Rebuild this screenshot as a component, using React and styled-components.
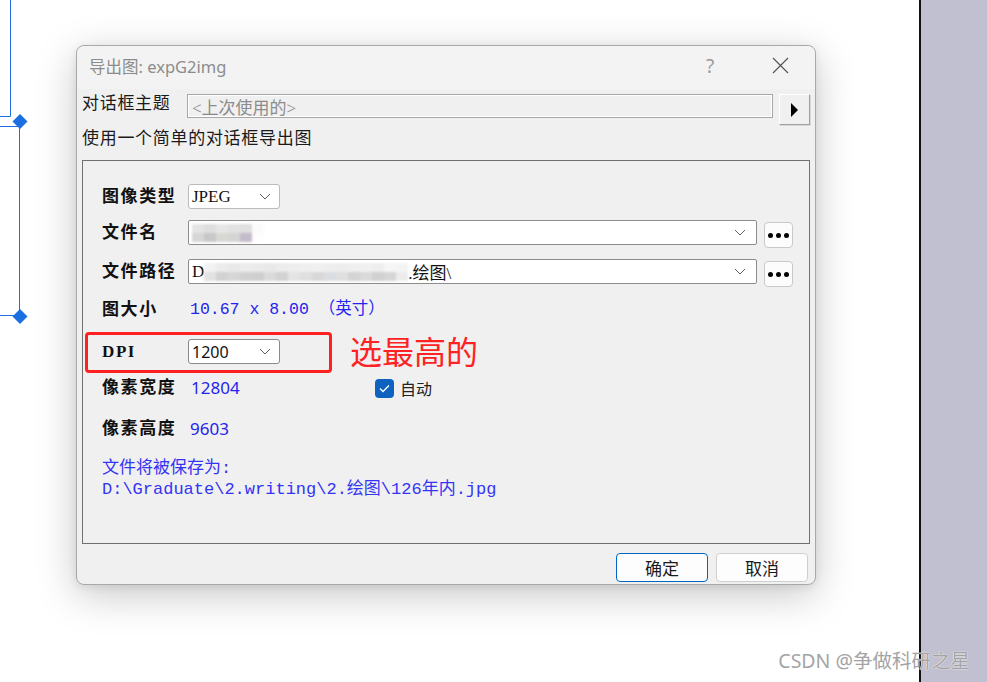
import React from 'react';
import styled, { createGlobalStyle } from 'styled-components';

const GlobalStyle = createGlobalStyle`
  html, body {
    margin: 0;
    padding: 0;
    background: #ffffff;
  }
  body {
    font-family: "Liberation Serif", "Noto Sans CJK SC", serif;
  }
`;

const Page = styled.div`
  position: relative;
  display: flex;
  width: 987px;
  height: 682px;
  overflow: hidden;
`;

const Canvas = styled.div`
  position: relative;
  flex: 1;
  background: #ffffff;
`;

const Side = styled.div`
  width: 66px;
  border-left: 2px solid #111;
  background: #c1c0d0;
`;

const Wires = styled.svg`
  position: absolute;
  left: 0;
  top: 0;
`;

const Watermark = styled.div`
  position: absolute;
  right: 17px;
  bottom: 8px;
  font-family: "Noto Sans", "Noto Sans CJK SC", sans-serif;
  font-size: 19.5px;
  color: #a4a4a4;
  text-shadow: 0 0 1px #fff, 0 0 1px #fff;
`;

const Dialog = styled.div`
  position: absolute;
  left: 76px;
  top: 45px;
  width: 738px;
  display: flex;
  flex-direction: column;
  background: #f0f0f0;
  border: 1px solid #a9a9a9;
  border-radius: 8px;
  box-shadow: 0 10px 40px rgba(0, 0, 0, 0.22), 0 2px 8px rgba(0, 0, 0, 0.08);
`;

const TitleBar = styled.div`
  display: flex;
  align-items: center;
  height: 39px;
  padding: 0 0 4px 12px;
  background: #f3f3f3;
  border-radius: 8px 8px 0 0;
`;

const Title = styled.div`
  flex: 1;
  font-family: "Noto Sans", "Noto Sans CJK SC", sans-serif;
  font-size: 16.5px;
  color: #8c8c8c;
`;

const TitleButton = styled.div`
  width: 70px;
  display: flex;
  justify-content: center;
  align-items: center;
  font-family: "Noto Sans", sans-serif;
  font-size: 19px;
  color: #9a9a9a;
`;

const Body = styled.div`
  display: flex;
  flex-direction: column;
  padding: 5px 4px 2px 5px;
`;

const ThemeRow = styled.div`
  display: flex;
  align-items: flex-start;
  height: 31px;
`;

const PlainText = styled.div`
  font-family: "Liberation Serif", "Noto Sans CJK SC", serif;
  font-size: 17px;
  line-height: 20px;
  color: #1a1a1a;
  letter-spacing: 0.7px;
  width: ${(p) => p.$w || 'auto'};
  margin-top: ${(p) => p.$mt || 0}px;
`;

const ThemeInput = styled.div`
  width: 580px;
  height: 22px;
  border: 1px solid #a7a7a7;
  box-shadow: inset 0 0 0 1px #ffffff;
  display: flex;
  align-items: center;
  padding-left: 4px;
  font-family: "Liberation Serif", "Noto Sans CJK SC", serif;
  font-size: 17px;
  color: #8c8c8c;
`;

const ArrowButton = styled.div`
  width: 29px;
  height: 29px;
  margin-left: 6px;
  border-top: 1px solid #ffffff;
  border-left: 1px solid #ffffff;
  border-right: 1px solid #a0a0a0;
  border-bottom: 1px solid #a0a0a0;
  box-shadow: 1px 1px 0 #d8d8d8;
  display: flex;
  align-items: center;
  justify-content: center;
`;

const Group = styled.div`
  box-sizing: border-box;
  margin: 11px 1px 0 0;
  height: 384px;
  border: 1px solid #707070;
  padding: 23px 16px 0 19px;
  display: flex;
  flex-direction: column;
`;

const Row = styled.div`
  position: relative;
  display: flex;
  align-items: ${(p) => (p.$top ? 'flex-start' : 'center')};
  height: ${(p) => p.$h}px;
  margin-top: ${(p) => p.$mt || 0}px;
`;

const Label = styled.div`
  width: 86px;
  flex-shrink: 0;
  font-family: "Liberation Serif", "Noto Sans CJK SC", serif;
  font-weight: bold;
  font-size: 17px;
  letter-spacing: 1.6px;
  color: #111;
  line-height: ${(p) => (p.$top ? '25px' : '20px')};
`;

const Select = styled.div`
  height: 23px;
  width: 79px;
  background: #ffffff;
  border: 1px solid ${(p) => (p.$dark ? '#8a8a8a' : '#bcbcbc')};
  border-radius: 3px;
  display: flex;
  align-items: center;
  justify-content: space-between;
  padding: 0 8px 0 3px;
  font-family: ${(p) => (p.$sans ? '"Noto Sans", sans-serif' : '"Liberation Serif", serif')};
  font-size: ${(p) => (p.$sans ? '16px' : '17px')};
  color: #111;
`;

const Combo = styled.div`
  flex: 1;
  height: 23px;
  background: #ffffff;
  border: 1px solid #8c8c8c;
  border-radius: 2px;
  display: flex;
  align-items: center;
  padding: 0 10px 0 3px;
  font-family: "Liberation Serif", "Noto Sans CJK SC", serif;
  font-size: 17px;
  color: #111;
`;

const ComboText = styled.div`
  flex: 1;
  display: flex;
  align-items: center;
`;

const Blur = styled.div`
  display: grid;
  grid-template-columns: repeat(${(p) => p.$cols}, 12px);
  grid-auto-rows: 9px;
  filter: blur(0.8px);
`;

const Pixel = styled.div`
  background: ${(p) => p.$c};
`;

const DotsButton = styled.div`
  width: 27px;
  height: 24px;
  margin: 2px 0 0 7px;
  background: #fcfcfc;
  border: 1px solid #c9c9c9;
  border-radius: 4px;
  display: flex;
  align-items: center;
  justify-content: center;
  gap: 3px;
`;

const Dot = styled.span`
  width: 5px;
  height: 5px;
  border-radius: 50%;
  background: #000;
`;

const Value = styled.div`
  width: ${(p) => (p.$w ? `${p.$w}px` : 'auto')};
  flex-shrink: 0;
  padding-left: ${(p) => p.$pl || 0}px;
  font-family: ${(p) =>
    p.$mono ? '"Liberation Mono", "Noto Sans CJK SC", monospace' : '"Noto Sans", sans-serif'};
  font-size: ${(p) => (p.$mono ? '16.5px' : '17px')};
  line-height: 20px;
  color: #2424ee;
`;

const Highlight = styled.div`
  position: absolute;
  left: -17px;
  top: -7px;
  width: 241px;
  height: 35px;
  border: 3px solid #ff2020;
  border-radius: 4px;
`;

const Note = styled.div`
  position: absolute;
  left: 248px;
  top: -9px;
  font-family: "Noto Sans CJK SC", sans-serif;
  font-size: 32px;
  line-height: 40px;
  color: #ff2222;
`;

const Check = styled.div`
  display: flex;
  align-items: center;
  gap: 6px;
  font-family: "Noto Sans CJK SC", sans-serif;
  font-size: 16px;
  color: #222;
`;

const CheckBox = styled.div`
  width: 19px;
  height: 19px;
  border-radius: 4px;
  background: #0f62c0;
  display: flex;
  align-items: center;
  justify-content: center;
`;

const SaveText = styled.div`
  margin-top: 19px;
  font-family: "Liberation Mono", "Noto Sans CJK SC", monospace;
  font-size: 17px;
  line-height: 21px;
  color: #3434f4;
`;

const Footer = styled.div`
  display: flex;
  justify-content: flex-end;
  gap: 8px;
  margin: 9px 3px 0 0;
`;

const Button = styled.button`
  width: 92px;
  height: 29px;
  background: #fdfdfd;
  border: 1px solid ${(p) => (p.$primary ? '#0067c0' : '#cfcfcf')};
  border-radius: 4px;
  font-family: "Liberation Serif", "Noto Sans CJK SC", serif;
  font-size: 17px;
  color: #1a1a1a;
  padding: 0;
`;

const Chevron = () => (
  <svg width="12" height="7" viewBox="0 0 12 7">
    <path d="M1 1 L6 6 L11 1" fill="none" stroke="#606060" strokeWidth="1" />
  </svg>
);

const blurName = [
  '#e4e4e4', '#dedede', '#e6e6e6', '#e2e2e2', '#e0e0e0', '#fafafa',
  '#d6d6d6', '#c8c8c8', '#d8d8d2', '#d4d4d4', '#c4bccb', '#fdfdfd',
];

const blurPath = [
  '#f2f2f2', '#ececec', '#e9e9e9', '#ececec', '#eaeaea', '#e8e8e8', '#ececec', '#eeeeee', '#efefef', '#f0f0f0', '#eeeeee', '#ededed', '#efefef', '#f0f0f0', '#eeeeee', '#f6f6f6', '#f4f4f4',
  '#e2e2e2', '#d2d2d2', '#d6d6d6', '#d1d1d1', '#cfcfcf', '#dadada', '#d2d2d2', '#e4e4e4', '#dfdfdf', '#d8d8d8', '#d9dde2', '#dfdfdf', '#d4d4d4', '#dadada', '#d1d1d1', '#d6d6d6', '#ececec',
];

const App = () => {
  return (
    <>
      <GlobalStyle />
      <Page>
        <Canvas>
          <Wires width="30" height="330" viewBox="0 0 30 330">
            <path d="M10.5 0 V116.5 H0" fill="none" stroke="#1b6fe0" strokeWidth="1" />
            <path d="M0 126.5 H19.5 V315.5 H0" fill="none" stroke="#1b6fe0" strokeWidth="1" />
            <path d="M20 114 L27.5 121.5 L20 129 L12.5 121.5 Z" fill="#1b6fe0" />
            <path d="M20 309 L27.5 316.5 L20 324 L12.5 316.5 Z" fill="#1b6fe0" />
          </Wires>

          <Dialog>
            <TitleBar>
              <Title>导出图: expG2img</Title>
              <TitleButton>?</TitleButton>
              <TitleButton>
                <svg width="17" height="17" viewBox="0 0 17 17">
                  <path d="M1 1 L16 16 M16 1 L1 16" stroke="#555" strokeWidth="1.2" />
                </svg>
              </TitleButton>
            </TitleBar>

            <Body>
              <ThemeRow>
                <PlainText $w="105px">对话框主题</PlainText>
                <ThemeInput>&lt;上次使用的&gt;</ThemeInput>
                <ArrowButton>
                  <svg width="9" height="14" viewBox="0 0 9 14">
                    <path d="M1 0 L8 7 L1 14 Z" fill="#000" />
                  </svg>
                </ArrowButton>
              </ThemeRow>

              <PlainText $mt={4}>使用一个简单的对话框导出图</PlainText>

              <Group>
                <Row $h={25}>
                  <Label>图像类型</Label>
                  <Select>
                    JPEG
                    <Chevron />
                  </Select>
                </Row>

                <Row $h={27} $mt={11} $top>
                  <Label $top>文件名</Label>
                  <Combo>
                    <ComboText>
                      <Blur $cols={6}>
                        {blurName.map((c, i) => (
                          <Pixel key={i} $c={c} />
                        ))}
                      </Blur>
                    </ComboText>
                    <Chevron />
                  </Combo>
                  <DotsButton>
                    <Dot />
                    <Dot />
                    <Dot />
                  </DotsButton>
                </Row>

                <Row $h={27} $mt={12} $top>
                  <Label $top>文件路径</Label>
                  <Combo>
                    <ComboText>
                      D
                      <Blur $cols={17}>
                        {blurPath.map((c, i) => (
                          <Pixel key={i} $c={c} />
                        ))}
                      </Blur>
                      .绘图\
                    </ComboText>
                    <Chevron />
                  </Combo>
                  <DotsButton>
                    <Dot />
                    <Dot />
                    <Dot />
                  </DotsButton>
                </Row>

                <Row $h={20} $mt={14}>
                  <Label>图大小</Label>
                  <Value $mono $pl={2}>10.67 x 8.00 （英寸）</Value>
                </Row>

                <Row $h={25} $mt={19}>
                  <Label>DPI</Label>
                  <Select $dark $sans>
                    1200
                    <Chevron />
                  </Select>
                  <Highlight />
                  <Note>选最高的</Note>
                </Row>

                <Row $h={20} $mt={14}>
                  <Label>像素宽度</Label>
                  <Value $w={184} $pl={3}>12804</Value>
                  <Check>
                    <CheckBox>
                      <svg width="11" height="9" viewBox="0 0 11 9">
                        <path d="M1 4.5 L4 7.5 L10 1.5" fill="none" stroke="#fff" strokeWidth="1.3" />
                      </svg>
                    </CheckBox>
                    自动
                  </Check>
                </Row>

                <Row $h={20} $mt={21}>
                  <Label>像素高度</Label>
                  <Value $pl={2}>9603</Value>
                </Row>

                <SaveText>
                  文件将被保存为:
                  <br />
                  D:\Graduate\2.writing\2.绘图\126年内.jpg
                </SaveText>
              </Group>

              <Footer>
                <Button $primary>确定</Button>
                <Button>取消</Button>
              </Footer>
            </Body>
          </Dialog>
        </Canvas>
        <Side />
        <Watermark>CSDN @争做科研之星</Watermark>
      </Page>
    </>
  );
};

export default App;
